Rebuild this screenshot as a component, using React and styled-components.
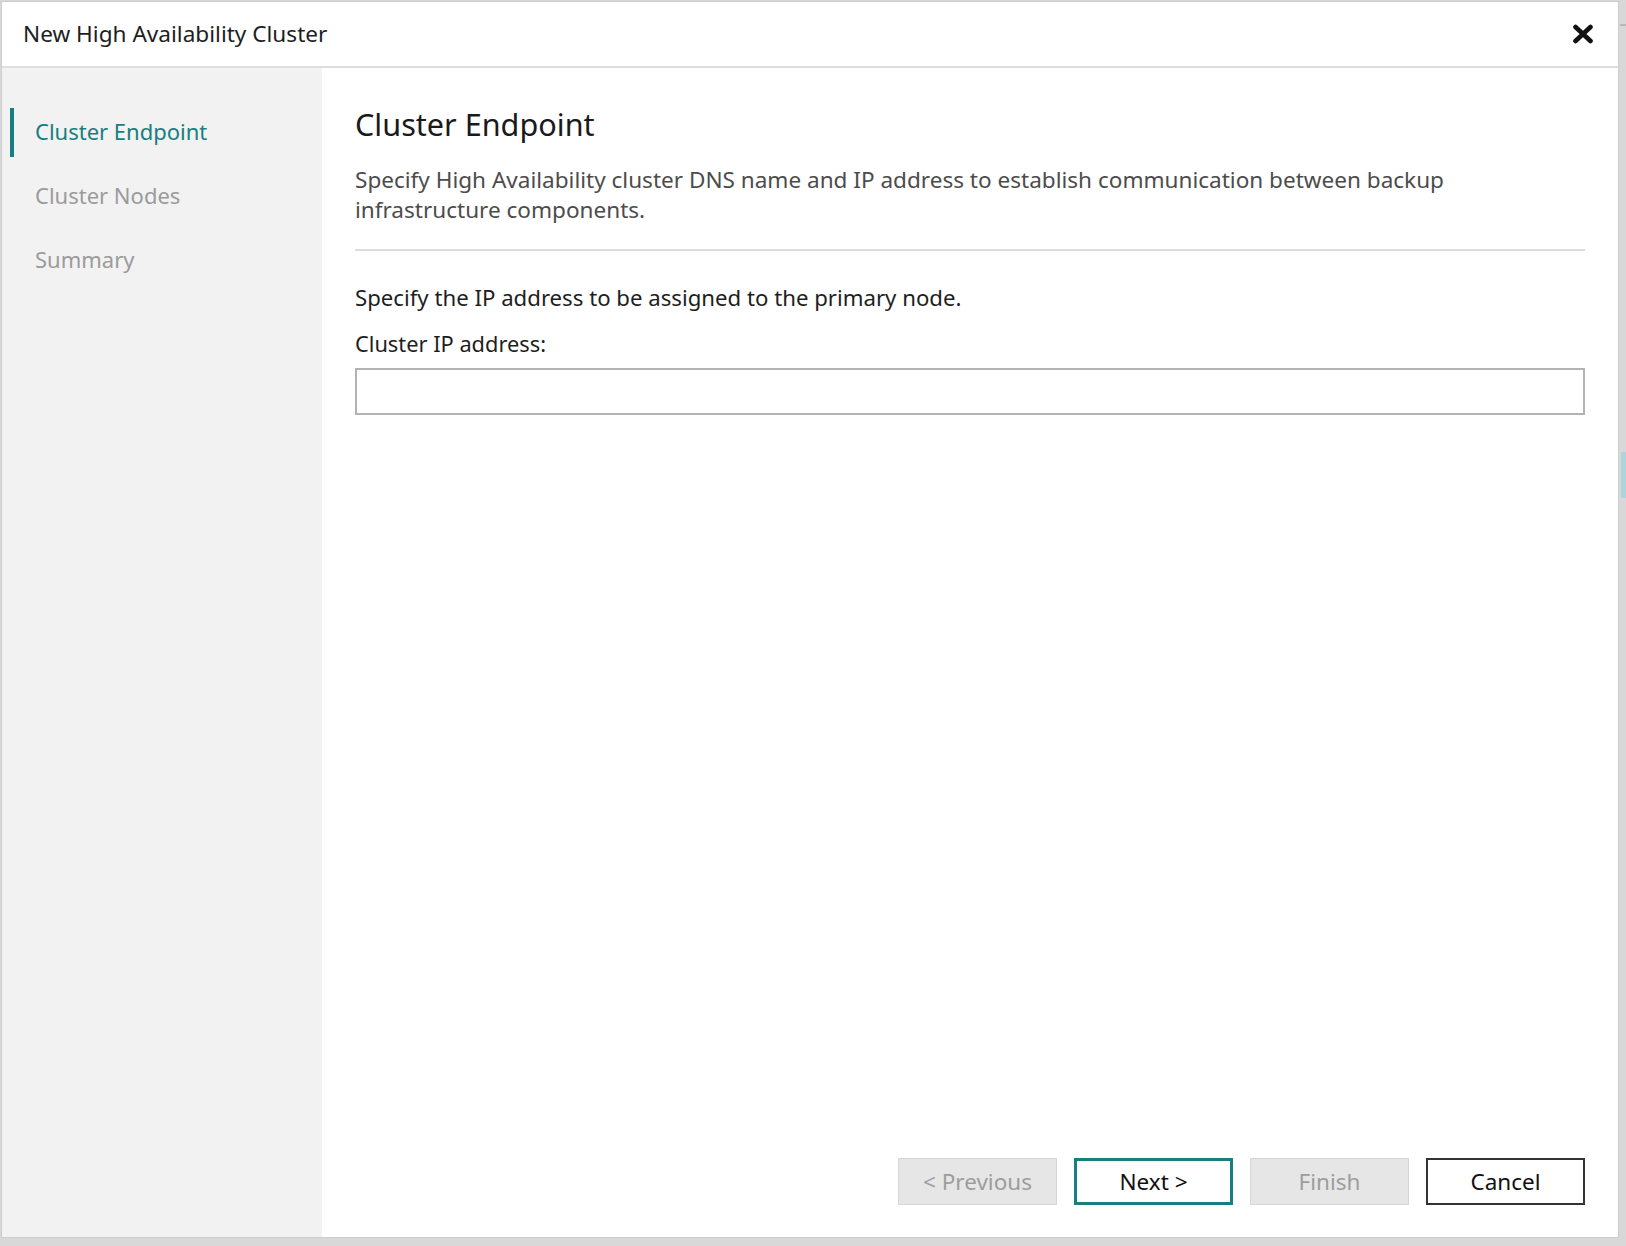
import React from "react";
import styled, { createGlobalStyle } from "styled-components";

const GlobalStyle = createGlobalStyle`
  html, body {
    margin: 0;
    padding: 0;
    background: #d8d8d8;
  }
  body {
    font-family: "Noto Sans", "Open Sans", sans-serif;
    color: #1e1e1e;
  }
`;

const TEAL = "#187e80";

const steps = [
  { id: "endpoint", label: "Cluster Endpoint" },
  { id: "nodes", label: "Cluster Nodes" },
  { id: "summary", label: "Summary" },
];

function CloseIcon() {
  return (
    <svg width="22" height="20" viewBox="0 0 22 20">
      <path
        d="M3.5 3 L18.5 17 M18.5 3 L3.5 17"
        stroke="#111"
        strokeWidth="4.6"
        strokeLinecap="round"
        fill="none"
      />
    </svg>
  );
}

export default function App() {
  return (
    <>
      <GlobalStyle />
      <Screen>
        <Dialog>
          <Header>
            <Title>New High Availability Cluster</Title>
            <CloseButton aria-label="Close">
              <CloseIcon />
            </CloseButton>
          </Header>
          <Body>
            <Sidebar>
              {steps.map((s, i) => (
                <StepItem key={s.id} $active={i === 0}>
                  {s.label}
                </StepItem>
              ))}
            </Sidebar>
            <Content>
              <Heading>Cluster Endpoint</Heading>
              <Description>
                Specify High Availability cluster DNS name and IP address to
                establish communication between backup infrastructure
                components.
              </Description>
              <Divider />
              <Hint>Specify the IP address to be assigned to the primary node.</Hint>
              <FieldLabel htmlFor="cluster-ip">Cluster IP address:</FieldLabel>
              <TextInput id="cluster-ip" type="text" />
              <Footer>
                <Button $variant="disabled">&lt; Previous</Button>
                <Button $variant="primary">Next &gt;</Button>
                <Button $variant="disabled">Finish</Button>
                <Button $variant="default">Cancel</Button>
              </Footer>
            </Content>
          </Body>
        </Dialog>
        <BackStrip>
          <BackTick />
          <BackThumb />
        </BackStrip>
      </Screen>
    </>
  );
}

const Screen = styled.div`
  display: flex;
  width: 1626px;
  height: 1246px;
  background: #d8d8d8;
  overflow: hidden;
`;

const Dialog = styled.div`
  display: flex;
  flex-direction: column;
  width: 1616px;
  height: 1235px;
  margin: 2px 0 0 2px;
  background: #ffffff;
  box-shadow: 0 0 0 1px #cdcdcd;
`;

const Header = styled.div`
  display: flex;
  align-items: center;
  justify-content: space-between;
  height: 64px;
  padding: 0 24px 0 21px;
  border-bottom: 2px solid #dedede;
  flex-shrink: 0;
`;

const Title = styled.div`
  font-size: 22.6px;
  color: #1e1e1e;
  padding-bottom: 2px;
`;

const CloseButton = styled.button`
  display: flex;
  align-items: center;
  justify-content: center;
  padding: 0;
  border: none;
  background: transparent;
  cursor: pointer;
`;

const Body = styled.div`
  display: flex;
  flex: 1;
  min-height: 0;
`;

const Sidebar = styled.nav`
  display: flex;
  flex-direction: column;
  gap: 15px;
  width: 320px;
  flex-shrink: 0;
  padding: 40px 0 0 8px;
  box-sizing: border-box;
  background: #f2f2f2;
`;

const StepItem = styled.div`
  display: flex;
  align-items: center;
  height: 49px;
  box-sizing: border-box;
  padding: 0 0 4px 21px;
  border-left: 4px solid ${(p) => (p.$active ? TEAL : "transparent")};
  font-size: 22px;
  color: ${(p) => (p.$active ? TEAL : "#9b9b9b")};
`;

const Content = styled.main`
  display: flex;
  flex-direction: column;
  flex: 1;
  padding: 36px 33px 32px 33px;
  box-sizing: border-box;
`;

const Heading = styled.h1`
  margin: 0;
  font-size: 30.6px;
  line-height: 40px;
  font-weight: 400;
  color: #1a1a1a;
`;

const Description = styled.p`
  margin: 21px 0 0;
  font-size: 22.55px;
  line-height: 30px;
  color: #4c4c4c;
  max-width: 1110px;
`;

const Divider = styled.hr`
  margin: 24px 0 0;
  border: none;
  height: 2px;
  background: #dcdcdc;
`;

const Hint = styled.p`
  margin: 32px 0 0;
  font-size: 22.2px;
  line-height: 30px;
  color: #1e1e1e;
`;

const FieldLabel = styled.label`
  margin-top: 16px;
  font-size: 21.8px;
  line-height: 30px;
  color: #1e1e1e;
`;

const TextInput = styled.input`
  margin-top: 9px;
  height: 47px;
  box-sizing: border-box;
  border: 2px solid #b3b3b3;
  padding: 0 10px;
  font-family: inherit;
  font-size: 22px;
  outline: none;
`;

const Footer = styled.div`
  display: flex;
  justify-content: flex-end;
  gap: 17px;
  margin-top: auto;
`;

const buttonLook = {
  disabled: `
    background: #e6e6e6;
    border: 1px solid #d6d6d6;
    color: #9d9d9d;
  `,
  primary: `
    background: #ffffff;
    border: 3px solid ${TEAL};
    color: #111111;
  `,
  default: `
    background: #ffffff;
    border: 2px solid #333333;
    color: #111111;
  `,
};

const Button = styled.button`
  width: 159px;
  height: 47px;
  box-sizing: border-box;
  font-family: inherit;
  font-size: 22.5px;
  padding: 0;
  cursor: pointer;
  ${(p) => buttonLook[p.$variant]}
`;

const BackStrip = styled.div`
  display: flex;
  flex-direction: column;
  align-items: flex-end;
  flex: 1;
  padding-top: 24px;
`;

const BackTick = styled.div`
  width: 6px;
  height: 2px;
  background: #b8b8b8;
`;

const BackThumb = styled.div`
  width: 5px;
  height: 46px;
  margin-top: 426px;
  background: #acd5de;
`;
